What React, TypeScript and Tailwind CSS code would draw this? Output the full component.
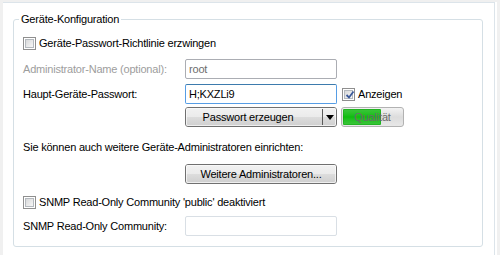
import React from 'react';

const font = { fontFamily: '"Liberation Sans", Arial, sans-serif' };

const CheckBox: React.FC<{ checked?: boolean }> = ({ checked }) => (
  <div className="w-[13px] h-[13px] border border-[#8f8f8f] bg-white p-[1px] shrink-0">
    <div className="relative w-full h-full border border-[#b4b9be] bg-gradient-to-br from-[#d8d9da] to-[#f7f7f7]">
      {checked && (
        <svg className="absolute left-[0px] top-[-1px]" width="10" height="10" viewBox="0 0 10 10">
          <path d="M1.5 5 L4 7.5 L8.5 1.5" fill="none" stroke="#3c5a9a" strokeWidth="1.8" />
        </svg>
      )}
    </div>
  </div>
);

const WinButton: React.FC<{ children: React.ReactNode; className?: string }> = ({ children, className }) => (
  <div
    className={
      'relative h-[20px] w-[152px] rounded-[3px] border border-[#707070] overflow-hidden flex items-center ' +
      (className ?? '')
    }
  >
    <div className="absolute inset-0 flex flex-col">
      <div className="h-1/2 bg-gradient-to-b from-[#f2f2f2] to-[#ebebeb]" />
      <div className="h-1/2 bg-gradient-to-b from-[#dddddd] to-[#cfcfcf]" />
    </div>
    <div className="absolute inset-0 rounded-[2px] border border-[#fcfcfc]/70" />
    <div className="relative flex-1 flex items-center h-full">{children}</div>
  </div>
);

const Label: React.FC<{ children: React.ReactNode; muted?: boolean }> = ({ children, muted }) => (
  <div className={'w-[162px] shrink-0 ' + (muted ? 'text-[#9d9d9d]' : 'text-black')}>{children}</div>
);

export default function App() {
  return (
    <div
      className="w-[500px] h-[255px] bg-[#f0f0f0] pl-[3px] pt-[2px] pr-[3px] text-[11px] leading-[13px] tracking-[-0.2px] overflow-hidden"
      style={font}
    >
      <div className="h-full bg-white pr-[2px]">
        <div className="h-full border-t border-r border-[#dce4ea] pt-[16px] pl-[10px]">
          <div className="relative w-[470px] h-[228px] rounded-[3px] border border-[#d5dfe5] pl-[9px] pt-[16px]">
            <span className="absolute left-[5px] top-[-7px] bg-white px-[2px] text-black">Geräte-Konfiguration</span>

            <div className="h-[14px] flex items-center gap-[3px]">
              <CheckBox />
              <span>Geräte-Passwort-Richtlinie erzwingen</span>
            </div>

            <div className="mt-[9px] h-[20px] flex items-center">
              <Label muted>Administrator-Name (optional):</Label>
              <div className="w-[152px] h-[20px] rounded-[2px] border border-[#abadb3] flex items-center px-[3px] text-[#6d6d6d]">
                root
              </div>
            </div>

            <div className="mt-[5px] h-[20px] flex items-center">
              <Label>Haupt-Geräte-Passwort:</Label>
              <div className="w-[152px] h-[20px] rounded-[2px] border border-[#569de5] border-t-[#3d7bad] flex items-center px-[3px] text-black">
                H;KXZLi9
              </div>
              <div className="ml-[5px] flex items-center gap-[3px]">
                <CheckBox checked />
                <span>Anzeigen</span>
              </div>
            </div>

            <div className="mt-[3px] h-[20px] flex items-center">
              <div className="w-[162px] shrink-0" />
              <WinButton>
                <span className="flex-1 text-center pr-[12px] text-black">Passwort erzeugen</span>
                <div className="w-[1px] h-[16px] bg-[#5a5a5a]" />
                <div className="w-[13px] flex items-center justify-center">
                  <svg width="8" height="5" viewBox="0 0 8 5">
                    <path d="M0 0 H8 L4 5 Z" fill="#000" />
                  </svg>
                </div>
              </WinButton>
              <div className="relative ml-[4px] w-[63px] h-[20px] rounded-[3px] border border-[#b2b2b2] overflow-hidden bg-gradient-to-b from-[#f3f3f3] via-[#dcdcdc] to-[#e8e8e8]">
                <div className="absolute left-[1px] top-[1px] bottom-[1px] w-[38px] rounded-[1px] bg-gradient-to-b from-[#37c437] via-[#0bbd0b] to-[#37c437] border border-[#0a9e0a]/40" />
                <div className="absolute inset-0 flex items-center justify-center text-[#6b6b6b]">Qualität</div>
              </div>
            </div>

            <div className="mt-[13px] h-[14px] flex items-center">
              Sie können auch weitere Geräte-Administratoren einrichten:
            </div>

            <div className="mt-[10px] h-[20px] flex items-center">
              <div className="w-[162px] shrink-0" />
              <WinButton>
                <span className="flex-1 text-center text-black">Weitere Administratoren...</span>
              </WinButton>
            </div>

            <div className="mt-[11px] h-[14px] flex items-center gap-[3px]">
              <CheckBox />
              <span>SNMP Read-Only Community 'public' deaktiviert</span>
            </div>

            <div className="mt-[7px] h-[20px] flex items-center">
              <Label>SNMP Read-Only Community:</Label>
              <div className="w-[152px] h-[20px] rounded-[2px] border border-[#d9dfe5]" />
            </div>
          </div>
        </div>
      </div>
    </div>
  );
}
